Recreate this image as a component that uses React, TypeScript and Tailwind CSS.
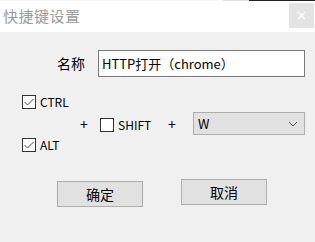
const font = { fontFamily: '"Noto Sans CJK SC", "Noto Sans", sans-serif' };

function CheckBox({ checked, label }: { checked: boolean; label: string }) {
  return (
    <div className="flex items-center">
      <div className="w-[14px] h-[14px] border border-[#333333] bg-white flex items-center justify-center">
        {checked && (
          <svg width="12" height="12" viewBox="0 0 12 12">
            <path d="M1.5 6 L4.5 9 L10.5 3" fill="none" stroke="#444" strokeWidth="1" />
          </svg>
        )}
      </div>
      <span className="ml-[4px] text-[12px] leading-none text-black">{label}</span>
    </div>
  );
}

export default function App() {
  return (
    <div className="w-[315px] h-[242px] bg-[#f0f0f0] flex flex-col select-none" style={font}>
      <div className="h-[32px] bg-white flex flex-col">
        <div className="h-[1px] flex">
          <div className="w-[223px] bg-[#f6f6f6]" />
          <div className="w-[26px] bg-[#e0e0e0]" />
          <div className="flex-1 bg-[#222222]" />
        </div>
        <div className="flex-1 flex items-center justify-between">
          <span className="ml-[3px] text-[15px] text-[#9a9a9a] tracking-[0.5px]">快捷键设置</span>
          <div className="mr-[1px] mb-[3px] w-[25px] h-[25px] bg-[#e3e3e3] flex items-center justify-center">
            <svg width="9" height="9" viewBox="0 0 9 9">
              <path d="M1 1 L8 8 M8 1 L1 8" stroke="#ffffff" strokeWidth="1.4" />
            </svg>
          </div>
        </div>
      </div>

      <div className="mt-[18px] flex items-center">
        <span className="ml-[57px] w-[41px] text-[14px] text-black">名称</span>
        <div className="w-[207px] h-[27px] border border-[#7a7a7a] bg-white flex items-center pl-[3px] text-[13px] text-black">
          HTTP打开（chrome）
        </div>
      </div>

      <div className="mt-[18px] flex items-center">
        <div className="ml-[22px] w-[58px] h-[57px] flex flex-col justify-between">
          <CheckBox checked label="CTRL" />
          <CheckBox checked label="ALT" />
        </div>
        <span className="w-[8px] text-[14px] leading-none text-black">+</span>
        <div className="ml-[12px] w-[68px] mt-[3px]">
          <CheckBox checked={false} label="SHIFT" />
        </div>
        <span className="w-[8px] text-[14px] leading-none text-black">+</span>
        <div className="ml-[17px] w-[112px] h-[23px] border border-[#adadad] bg-[#e1e1e1] flex items-center justify-between pl-[4px] pr-[6px]">
          <span className="text-[13px] text-black">W</span>
          <svg width="10" height="6" viewBox="0 0 10 6">
            <path d="M1 1 L5 5 L9 1" fill="none" stroke="#555" strokeWidth="1" />
          </svg>
        </div>
      </div>

      <div className="mt-[27px] flex items-start">
        <div className="ml-[57px] mt-[2px] w-[86px] h-[26px] border border-[#adadad] bg-[#e1e1e1] flex items-center justify-center text-[14px] text-black">
          确定
        </div>
        <div className="ml-[38px] w-[86px] h-[26px] border border-[#adadad] bg-[#e1e1e1] flex items-center justify-center text-[14px] text-black">
          取消
        </div>
      </div>
    </div>
  );
}
